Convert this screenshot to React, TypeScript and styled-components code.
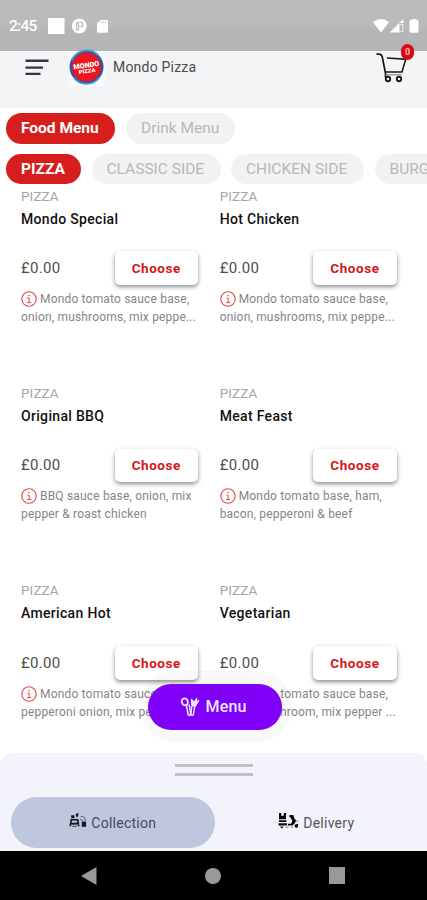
import React from 'react';
import styled, { createGlobalStyle } from 'styled-components';

const Global = createGlobalStyle`
  * { box-sizing: border-box; }
  body { margin: 0; background: #fff; font-family: Roboto, "Liberation Sans", sans-serif; }
  button { font: inherit; border: 0; padding: 0; }
`;

const Screen = styled.div`
  position: relative;
  width: 427px;
  height: 900px;
  overflow: hidden;
  display: flex;
  flex-direction: column;
  background: #fff;
`;

const StatusBar = styled.div`
  flex: 0 0 51px;
  display: flex;
  align-items: flex-start;
  padding: 16px 6px 0 9px;
  background: linear-gradient(#bcbcbc 0, #bababa 50%, #b3b5b7 60%, #b3b5b7 100%);
  color: #fff;
`;

const Clock = styled.span`
  width: 39px;
  font-size: 15.5px;
  line-height: 21px;
  font-weight: 500;
  letter-spacing: -0.7px;
`;

const StatusIcons = styled.div<{ $end?: boolean }>`
  display: flex;
  align-items: center;
  height: 20px;
  ${(p) => p.$end && 'margin-left: auto;'}
`;

const Header = styled.header`
  flex: 0 0 57px;
  display: flex;
  align-items: flex-start;
  padding-left: 25px;
  background: #f3f4f6;
`;

const MenuIcon = styled.svg`
  margin: 8px 20px 0 0;
`;

const LogoBox = styled.div`
  width: 36px;
  height: 37px;
  margin-top: -2px;
  background: linear-gradient(transparent 2px, #f9fafb 2px);
`;

const ShopName = styled.h1`
  margin: 6px 0 0 8px;
  font-size: 14px;
  line-height: 20px;
  font-weight: 400;
  letter-spacing: 0.2px;
  color: #4b4b4d;
`;

const Cart = styled.div`
  position: relative;
  margin: 1px 19px 0 auto;
  width: 32px;
  height: 31px;
`;

const CartCount = styled.span`
  position: absolute;
  top: -8px;
  right: -6px;
  width: 13px;
  height: 16px;
  border-radius: 7px;
  background: #d90d10;
  color: #f0b8b8;
  font-size: 9px;
  font-weight: 700;
  line-height: 16px;
  text-align: center;
`;

const ChipRow = styled.nav<{ $gap: number }>`
  flex: none;
  display: flex;
  gap: ${(p) => p.$gap}px;
  padding: 5px 0 5px 6px;
  overflow: hidden;

  & + & {
    padding-bottom: 1.5px;
  }
`;

const Chip = styled.button<{ $w: number; $active?: boolean; $track?: number }>`
  flex: 0 0 ${(p) => p.$w}px;
  height: 30.5px;
  border-radius: 16px;
  background: ${(p) => (p.$active ? '#d61e1c' : '#f2f2f2')};
  color: ${(p) => (p.$active ? '#fff' : '#b8b8b8')};
  font-size: 15.5px;
  font-weight: ${(p) => (p.$active ? 700 : 400)};
  letter-spacing: ${(p) => p.$track ?? 0}px;
  text-align: left;
  padding-left: 15px;
  white-space: nowrap;
`;

const Products = styled.main`
  flex: 1 1 0;
  min-height: 0;
  overflow: hidden;
  display: grid;
  grid-template-columns: 177px 177px;
  grid-auto-rows: 197.4px;
  column-gap: 21.7px;
  align-content: start;
  padding: 0 0 0 21px;
`;

const Product = styled.article`
  display: flex;
  flex-direction: column;
`;

const Category = styled.span`
  font-size: 13.5px;
  line-height: 20px;
  letter-spacing: 0.1px;
  color: #a6a6a6;
`;

const Name = styled.h2`
  margin: 2px 0 0;
  font-size: 14px;
  line-height: 22px;
  font-weight: 500;
  color: #111;
  letter-spacing: 0.32px;
`;

const BuyRow = styled.div`
  display: flex;
  justify-content: space-between;
  align-items: center;
  margin-top: 21px;
  height: 35px;
`;

const Price = styled.span`
  font-size: 15px;
  letter-spacing: 0.3px;
  color: #4e4e4e;
`;

const Choose = styled.button`
  width: 83.5px;
  height: 33.5px;
  border-radius: 5px;
  background: #fff;
  color: #d81417;
  font-size: 13.5px;
  font-weight: 700;
  letter-spacing: 0.55px;
  box-shadow: 0 2px 4px rgba(0, 0, 0, 0.46);
`;

const Description = styled.p`
  margin: 4.5px 0 0;
  font-size: 12px;
  line-height: 18px;
  letter-spacing: 0.18px;
  color: #858585;
  white-space: nowrap;
`;

const InfoIcon = styled.svg`
  vertical-align: -4px;
  margin-right: 3px;
`;

const FloatHalo = styled.div`
  position: absolute;
  left: 140px;
  top: 671px;
  width: 152px;
  height: 71px;
  padding: 12.5px 10px 12.5px 7.5px;
  border-radius: 35px;
  background: rgba(90, 70, 70, 0.035);
`;

const FloatButton = styled.button`
  width: 134.5px;
  height: 46px;
  border-radius: 23px;
  background: #8000f8;
  color: #f3e6ff;
  display: flex;
  align-items: center;
  padding-left: 32px;
  gap: 6px;
  font-size: 16px;
  font-weight: 500;
  letter-spacing: 0.2px;
`;

const Sheet = styled.section`
  flex: 0 0 98px;
  display: flex;
  flex-direction: column;
  align-items: center;
  padding-top: 10.5px;
  border-radius: 12px 12px 0 0;
  background: #f2f3fb;
`;

const Grip = styled.div`
  width: 78px;
  height: 12.5px;
  border: solid #bfc0c5;
  border-width: 3px 0;
`;

const Modes = styled.div`
  display: flex;
  width: 427px;
  padding: 0 9px 0 11px;
  margin-top: 21px;
`;

const Mode = styled.button<{ $active?: boolean }>`
  flex: 1;
  height: 51px;
  border-radius: 26px;
  background: ${(p) => (p.$active ? '#bfc7de' : 'transparent')};
  color: ${(p) => (p.$active ? '#464b5a' : '#55565c')};
  display: flex;
  align-items: center;
  justify-content: center;
  gap: 4px;
  font-size: 14px;
  letter-spacing: 0.25px;

  svg {
    margin-top: -4px;
  }
`;

const NavBar = styled.footer`
  flex: 0 0 49px;
  display: flex;
  align-items: center;
  justify-content: space-between;
  padding: 0 82px 0 81px;
  background: #000;
`;

const Logo = () => (
  <svg width="36" height="36" viewBox="0 0 36 36">
    <circle cx="17.5" cy="18" r="17" fill="#2d55a8" />
    <path d="M3 11A16.2 16.2 0 0 1 29 6" fill="none" stroke="#439cce" strokeWidth="1.8" />
    <path d="M5 29a16.2 16.2 0 0 0 25 0" fill="none" stroke="#439cce" strokeWidth="1.8" />
    <circle cx="17.5" cy="18" r="14.6" fill="#ed1620" />
    <g transform="rotate(-8 17 18)" fill="#fff" fontFamily="Roboto" fontWeight="900" textAnchor="middle">
      <text x="17.5" y="18.8" fontSize="7.2" textLength="26" lengthAdjust="spacingAndGlyphs">MONDO</text>
      <text x="17.5" y="24" fontSize="5.4" textLength="17" lengthAdjust="spacingAndGlyphs">PIZZA</text>
    </g>
  </svg>
);

const CartGlyph = () => (
  <svg width="32" height="31" viewBox="0 0 32 31" fill="none" stroke="#161616">
    <path d="M.5 2.200h2.300q2.700 0 3.500 2.800l3.200 16.400v4.200" strokeWidth="1.7" />
    <path d="M11 6l18.700 1.200L26 20H9.200" strokeWidth="1.5" />
    <path d="M9.500 22.800H26" stroke="#777" strokeWidth="1" />
    <circle cx="12" cy="27" r="2.200" strokeWidth="1.9" />
    <circle cx="23" cy="27" r="2.200" strokeWidth="1.9" />
  </svg>
);

const Info = () => (
  <InfoIcon width="16" height="16" viewBox="0 0 16 16" fill="none" stroke="#dc4a4e">
    <circle cx="8" cy="8" r="7.2" strokeWidth="1.1" />
    <path d="M6.4 7h1.800v4.500M6 11.600h4.200" strokeWidth="1" />
    <circle cx="8" cy="4.5" r=".8" fill="#dc4a4e" stroke="none" />
  </InfoIcon>
);

const Utensils = () => (
  <svg width="20" height="20" viewBox="0 0 20 20" fill="none" stroke="#f3e6ff" strokeLinecap="round" strokeLinejoin="round">
    <ellipse cx="4.8" cy="4.8" rx="3" ry="3.500" strokeWidth="1.8" transform="rotate(-25 4.8 4.8)" />
    <path d="M6.500 8.500l1.600 9.300q1.400 1.200 2.600 0L9.300 8" strokeWidth="1.500" />
    <path d="M11.500 2.500l.3 5.200q1.600 2 3.600 1.200l3.300-5.400-2.500 2.500.4-4.500-2.300 4.300z" strokeWidth="1.400" fill="#f3e6ff" />
    <path d="M11.800 9.500l-.9 8q1.200 1.200 2.400.2l1.500-8.200" strokeWidth="1.400" />
  </svg>
);

const CollectionGlyph = () => (
  <svg width="18" height="17" viewBox="0 0 18 17" fill="#17181f">
    <path d="M2.200 3.200h3.200v3H2.200zM6.500 2.200l3-1.500-.4 3.500-1.300 1.200zM1.600 7h7.800l1.200 7.300H8.900l-.4-2H2.500l-.5 2H.4zM3 8.500l-.4 2.200h5.600l-.5-2.200z" />
    <path d="M12.800 9.600h4.300v5.200h-4.300z" />
    <path d="M11.800 4.500q4-1 4.500 4.200M11 7l3.500 2.500M2 12.500h8M3 14.300h5" fill="none" stroke="#4b5060" />
  </svg>
);

const DeliveryGlyph = () => (
  <svg width="21" height="18" viewBox="0 0 21 18" fill="#08080a">
    <path d="M1 1h2.200v2.800h2.600V1H8v6.300H1z" />
    <path d="M1 8.300h7.400v1.800H1zM.5 11.300h8.600v2.200H.5z" />
    <path d="M11.500 3h3.800l1 3.200 1.800 2.500-1.500 2.800-2.100 2H10v-1.800h3.100l1.300-3-2-3.500h-1z" />
    <path d="M17 12.400l3.300-.7-.5 3.500-1.800.8-1.500-1.700zM2 14.500h3.500L4 16.700z" />
    <path d="M7.500 15.200h3M13 15.200h2M18.300 8.500l2 1" stroke="#777982" fill="none" />
  </svg>
);

const products = [
  { name: 'Mondo Special', lines: ['Mondo tomato sauce base,', 'onion, mushrooms, mix peppe...'] },
  { name: 'Hot Chicken', lines: ['Mondo tomato sauce base,', 'onion, mushrooms, mix peppe...'] },
  { name: 'Original BBQ', lines: ['BBQ sauce base, onion, mix', 'pepper & roast chicken'] },
  { name: 'Meat Feast', lines: ['Mondo tomato base, ham,', 'bacon, pepperoni & beef'] },
  { name: 'American Hot', lines: ['Mondo tomato sauce base,', 'pepperoni onion, mix peppe...'] },
  { name: 'Vegetarian', lines: ['Mondo tomato sauce base,', 'onion, mushroom, mix pepper ...'] },
];

export default function App() {
  return (
    <>
      <Global />
      <Screen>
        <StatusBar>
          <Clock>2:45</Clock>
          <StatusIcons>
            <svg width="62" height="20" viewBox="0 0 62 20" fill="#fff">
              <path d="M0 2h16.500v16H0z" />
              <circle cx="31.3" cy="10" r="7.4" />
              <path d="M28.500 14V6.500h2V14zM31.500 6.500h3v4h-3" fill="none" stroke="#b9b9b9" strokeWidth="1.2" />
              <path d="M52.500 4h6.300q1.200 0 1.200 1.200v10.300q0 1.200-1.200 1.200h-8.600q-1.200 0-1.200-1.200V7.500z" />
              <path d="M53 5.200v2M55.200 5.200v2M57.400 5.200v2" stroke="#c6c6c6" />
            </svg>
          </StatusIcons>
          <StatusIcons $end>
            <svg width="48" height="20" viewBox="0 0 48 20" fill="#fff">
              <path d="M0 6.200Q8-.2 16 6.200L8 16.500z" />
              <path d="M16.500 16.500L30.500 3v4h-4v9.500z" />
              <path d="M27 8.500h2.800v7H27" fill="none" stroke="#e9e9e9" strokeWidth="1.1" />
              <path d="M39 3.800V3h4v.8h1.200q1.300 0 1.300 1.300v10.200q0 1.500-1.300 1.500h-6.400q-1.300 0-1.300-1.500V5.100q0-1.300 1.300-1.300z" />
            </svg>
          </StatusIcons>
        </StatusBar>

        <Header>
          <MenuIcon width="24" height="17" viewBox="0 0 24 17" fill="#35353f">
            <path d="M.5 .5h23V3H.5zM.5 7.400H18V9.700H.5zM.5 13.800h15v2.300H.5z" />
          </MenuIcon>
          <LogoBox><Logo /></LogoBox>
          <ShopName>Mondo Pizza</ShopName>
          <Cart>
            <CartGlyph />
            <CartCount>0</CartCount>
          </Cart>
        </Header>

        <ChipRow $gap={11}>
          <Chip $w={109} $active>Food Menu</Chip>
          <Chip $w={109}>Drink Menu</Chip>
        </ChipRow>
        <ChipRow $gap={10.5}>
          <Chip $w={75} $active>PIZZA</Chip>
          <Chip $w={129}>CLASSIC SIDE</Chip>
          <Chip $w={133}>CHICKEN SIDE</Chip>
          <Chip $w={90}>BURGERS</Chip>
        </ChipRow>

        <Products>
          {products.map((p) => (
            <Product key={p.name}>
              <Category>PIZZA</Category>
              <Name>{p.name}</Name>
              <BuyRow>
                <Price>£0.00</Price>
                <Choose>Choose</Choose>
              </BuyRow>
              <Description>
                <Info />
                {p.lines[0]}
                <br />
                {p.lines[1]}
              </Description>
            </Product>
          ))}
        </Products>

        <Sheet>
          <Grip />
          <Modes>
            <Mode $active><CollectionGlyph />Collection</Mode>
            <Mode><DeliveryGlyph />Delivery</Mode>
          </Modes>
        </Sheet>

        <NavBar>
          <svg width="16" height="18" viewBox="0 0 16 18"><path d="M0 9L15.500 0v18z" fill="#999" /></svg>
          <svg width="16" height="16" viewBox="0 0 16 16"><circle cx="8" cy="8" r="8" fill="#999" /></svg>
          <svg width="16" height="17" viewBox="0 0 16 17"><path d="M0 0h16v17H0z" fill="#999" /></svg>
        </NavBar>

        <FloatHalo>
          <FloatButton><Utensils />Menu</FloatButton>
        </FloatHalo>
      </Screen>
    </>
  );
}
